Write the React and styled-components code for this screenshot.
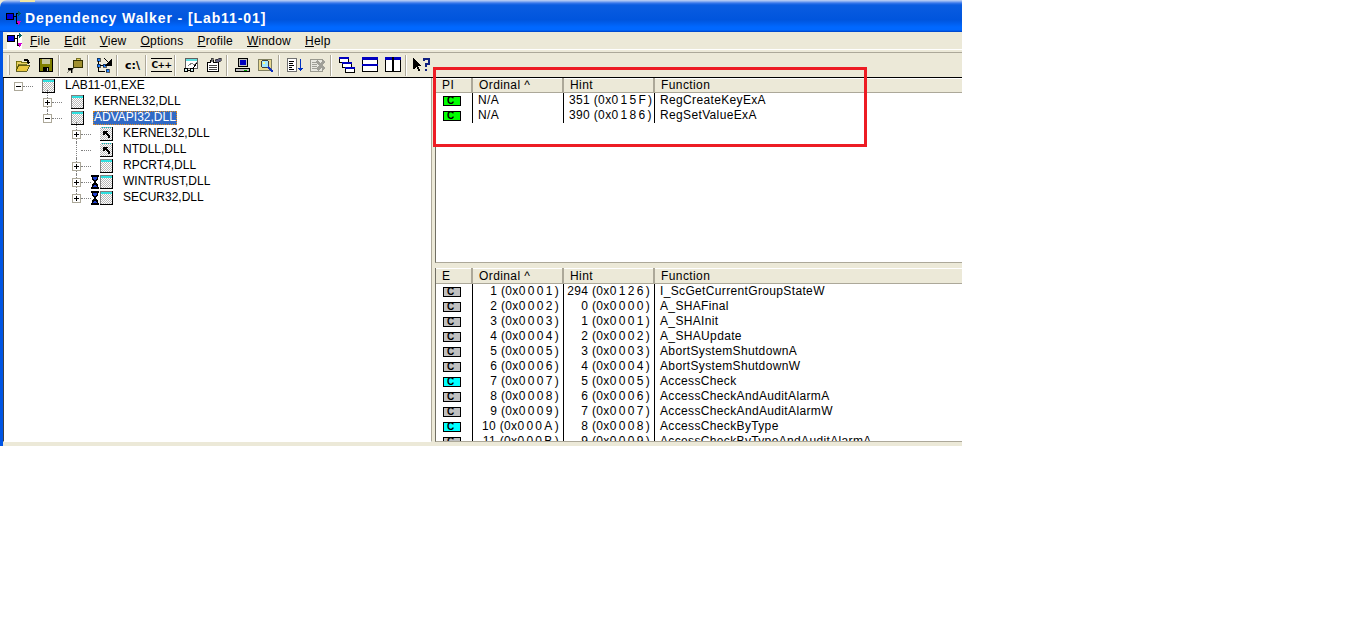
import React from 'react';
import styled, { createGlobalStyle } from 'styled-components';

const GlobalStyle = createGlobalStyle`
  html, body {
    margin: 0;
    background: #fff;
  }
  * { box-sizing: border-box; }
`;

const UI_FONT = `"Liberation Sans", Arial, sans-serif`;

const Window = styled.div`
  position: relative;
  width: 962px;
  height: 446px;
  background: #ece9d8;
  font-family: ${UI_FONT};
  font-size: 12px;
  color: #000;
  overflow: hidden;
`;

const TitleBar = styled.div`
  height: 32px;
  padding: 4px 0 0 6px;
  display: flex;
  align-items: center;
  gap: 4px;
  border-top-left-radius: 7px;
  background:
    linear-gradient(#f2e6a0, #f2e6a0) no-repeat 20px 0 / 15px 2px,
    linear-gradient(#c4d4f4 0, #6f9cf0 2px, #3a78ea 3px, #0a5ce0 5px, #0055dd 20px, #0068ff 27px, #0068ff 30px, #0040c0 32px);
`;

const TitleText = styled.span`
  color: #fff;
  font-weight: bold;
  font-size: 14px;
  letter-spacing: 0.9px;
`;

const Body = styled.div`
  border-left: 3px solid #0055e5;
  height: 414px;
  display: flex;
  flex-direction: column;
`;

const MenuBar = styled.div`
  height: 20px;
  display: flex;
  align-items: center;
  padding-left: 4px;
  border-bottom: 2px solid transparent;
  box-shadow: 0 1px 0 #aca899, inset 0 -1px 0 #fff;
`;

const MenuIcon = styled.div`
  width: 15px;
  height: 16px;
  margin-right: 8px;
  background: #fff;
  display: flex;
`;

const MenuItem = styled.span`
  margin-right: 14px;
  letter-spacing: 0.22px;
  u { text-decoration: underline; text-underline-offset: 1px; }
`;

const Toolbar = styled.div`
  height: 24px;
  margin-top: 1px;
  display: flex;
  align-items: center;
  padding-left: 4px;
`;

const Gripper = styled.div`
  width: 3px;
  height: 20px;
  margin-right: 1px;
  background: #f6f5ef;
  border-right: 1px solid #aca899;
`;

const ToolButton = styled.div`
  width: 23px;
  height: 22px;
  display: flex;
  align-items: center;
  justify-content: center;
  font-family: "DejaVu Sans", sans-serif;
  font-weight: bold;
`;

const CommandText = styled.span`
  font-size: 11px;
  letter-spacing: ${p => p.$tight ? '-0.5px' : '0'};
  ${p => p.$lined && 'border-top: 1px solid #000; border-bottom: 1px solid #000; padding: 1px 0; font-size: 9px; line-height: 10px;'}
`;

const ToolSep = styled.div`
  width: 5px;
  height: 21px;
  margin-left: 1px;
  background: linear-gradient(90deg, #aca899 0 1px, #fff 1px 2px, transparent 2px);
`;

const Panes = styled.div`
  flex: 1;
  display: flex;
  min-height: 0;
  box-shadow: inset 0 1px 0 #000;
  padding-top: 1px;
`;

const TreePane = styled.div`
  width: 429px;
  height: 364px;
  background: #fff;
  border-left: 1px solid #404040;
  border-right: 1px solid #aca899;
  border-bottom: 1px solid #fff;
`;

const TreeRow = styled.div`
  position: relative;
  height: 16px;
  display: flex;
  align-items: center;
  padding-left: ${p => 10 + p.$depth * 29}px;
  ${p => p.$stem && `
    &::before {
      content: '';
      position: absolute;
      left: ${10 + p.$depth * 29 + 4}px;
      top: ${p.$stemTop ?? 0}px;
      bottom: ${p.$stemBottom ?? 0}px;
      border-left: 1px dotted #808080;
    }
  `}
`;

const Expander = styled.div`
  position: relative;
  z-index: 1;
  width: 9px;
  height: 9px;
  flex: none;
  border: 1px solid #aca899;
  background: #fff;
  visibility: ${p => p.$empty ? 'hidden' : 'visible'};
  &::before {
    content: '';
    position: absolute;
    left: 1px;
    top: 3px;
    width: 5px;
    height: 1px;
    background: #000;
  }
  ${p => p.$plus && `
    &::after {
      content: '';
      position: absolute;
      left: 3px;
      top: 1px;
      width: 1px;
      height: 5px;
      background: #000;
    }
  `}
`;

const Connector = styled.div`
  width: 10px;
  flex: none;
  border-top: 1px dotted #808080;
`;

const NodeIcons = styled.div`
  width: 32px;
  height: 16px;
  flex: none;
  display: flex;
  align-items: center;
`;

const WaitSlot = styled.div`
  width: 9px;
  flex: none;
  display: flex;
`;

const NodeLabel = styled.span`
  margin-left: ${p => p.$selected ? '-1px' : '0'};
  height: 14px;
  line-height: 13px;
  padding: 0 ${p => p.$selected ? '1px' : '0'};
  white-space: nowrap;
  ${p => p.$selected && `
    background: #316ac5;
    color: #fff;
    outline: 1px dotted #e08a1e;
    outline-offset: -1px;
  `}
`;

const RightSide = styled.div`
  flex: 1;
  min-width: 0;
  margin-left: 3px;
  display: flex;
  flex-direction: column;
  height: 364px;
`;

const ListPane = styled.div`
  height: ${p => p.$height}px;
  background: #fff;
  border-left: 1px solid #716f64;
  border-bottom: 1px solid #aca899;
  overflow: hidden;
`;

const Splitter = styled.div`
  height: ${p => p.$height}px;
  background: #ece9d8;
  flex: none;
`;

const Columns = styled.div`
  display: grid;
  grid-template-columns: 37px 91px 91px 1fr;
`;

const HeaderRow = styled(Columns)`
  height: ${p => p.$height}px;
  background: #ece9d8;
  border-bottom: 1px solid #aca899;
  letter-spacing: 0.4px;
`;

const HeaderCell = styled.div`
  padding-left: 6px;
  line-height: ${p => p.$lineHeight}px;
  border-right: 2px solid #aca899;
  box-shadow: inset 0 1px 0 #fff;
  &:last-child { border-right: 0; }
`;

const ListRow = styled(Columns)`
  height: 15px;
  line-height: 14px;
`;

const IconCell = styled.div`
  border-right: 1px solid #000;
  padding: 3px 0 0 7px;
`;

const Badge = styled.div`
  width: 18px;
  height: 10px;
  display: flex;
  align-items: center;
  padding-left: 3px;
  background: ${p => p.$color};
  border: 1px solid #000;
  font-family: ${UI_FONT};
  font-weight: bold;
  font-size: 10px;
  line-height: 8px;
`;

const TextCell = styled.div`
  border-right: 1px solid #000;
  white-space: nowrap;
  letter-spacing: 0.35px;
  text-align: ${p => p.$right ? 'right' : 'left'};
  padding: ${p => p.$right ? '0 4px 0 0' : '0 0 0 5px'};
  &:last-child { border-right: 0; }
`;

const HexDigits = styled.span`
  letter-spacing: 2.3px;
`;

const HighlightBox = styled.div`
  position: absolute;
  left: 433px;
  top: 67px;
  width: 434px;
  height: 80px;
  border: 3px solid #ed1c24;
  pointer-events: none;
`;

const Px = ({ children, w = 16, h = 16 }) => (
  <svg width={w} height={h} viewBox={`0 0 ${w} ${h}`} shapeRendering="crispEdges" style={{ display: 'block' }}>
    {children}
  </svg>
);

const AppIcon = () => (
  <Px w={15} h={15}>
    <rect x="0.5" y="2.5" width="7" height="6" fill="#0000e0" stroke="#000" />
    <path d="M8 5.5h3M10.5 2v11M10 2.5h2M10 12.5h2" stroke="#000" fill="none" />
    <path d="M12 0h1v1h1v1h1v1h-1v1h-1v1h-1z" fill="#006060" />
    <path d="M11 10h4v1h-1v2h-1v1h-1v-2h-1z" fill="#d000d0" />
  </Px>
);

const DitherDefs = ({ id }) => (
  <defs>
    <pattern id={id} width="2" height="2" patternUnits="userSpaceOnUse">
      <rect width="2" height="2" fill="#b8b8b8" />
      <rect width="1" height="1" fill="#fff" />
      <rect x="1" y="1" width="1" height="1" fill="#fff" />
    </pattern>
  </defs>
);

const ModuleIcon = ({ forwarded, id }) => (
  <Px w={13} h={14}>
    <DitherDefs id={id} />
    <rect x="0" y="0" width="12" height="13" fill={`url(#${id})`} />
    {!forwarded && <path d="M0 0.5h12M0.5 0v13" stroke="#808080" fill="none" />}
    {forwarded
      ? <path d="M2 0.5h1M4 0.5h1M6 0.5h1M8 0.5h1M10 0.5h1" stroke="#00c0c0" />
      : <rect x="1" y="1" width="11" height="2" fill="#30e0e0" />}
    <path d="M12.5 0v14M0 13.5h13" stroke="#000" fill="none" />
    {forwarded && <path d="M3 4h5v1h-1v1h1v1h1v1h1v3h-2v-2h-1v-1h-1v-1h-1v1h-2z" fill="#000" />}
  </Px>
);

const Hourglass = () => (
  <Px w={9} h={14}>
    <path d="M0 0h8v2h-1v3h-1v1h-1v2h1v1h1v3h1v2h-8v-2h1v-3h1v-1h1v-2h-1v-1h-1v-3h-1z" fill="#000" />
    <path d="M2 2h4v2h-1v1h-2v-1h-1z" fill="#2040d0" />
    <path d="M3 10h2v1h1v1h-4v-1h1z" fill="#2040d0" />
  </Px>
);

// toolbar pictures, drawn on a 16px grid
const FolderOpen = () => (
  <Px>
    <path d="M1 4h5v1h6v2h-8l-3 7z" fill="#e8d060" stroke="#606000" strokeWidth="0.8" />
    <path d="M4 8h11l-3 6h-11z" fill="#e8c840" stroke="#404000" strokeWidth="0.8" />
    <path d="M9 2h4v1h1v2h1l-2 2-2-2h1v-1h-3z" fill="#000" />
  </Px>
);
const Floppy = () => (
  <Px>
    <rect x="1.5" y="1.5" width="13" height="13" fill="#808000" stroke="#000" />
    <rect x="4" y="2" width="8" height="5" fill="#c8c8a0" />
    <rect x="5" y="10" width="6" height="5" fill="#000" />
    <rect x="9" y="11" width="1" height="3" fill="#c0c0c0" />
  </Px>
);
const Connect = () => (
  <Px>
    <rect x="6.5" y="3.5" width="9" height="7" fill="#a09030" stroke="#303000" />
    <rect x="9" y="1" width="4" height="2" fill="#e0d060" stroke="#303000" strokeWidth="0.6" />
    <path d="M0 16l4-4M1 11h5v1h-1v4h-1v-3h-3z" fill="#000" stroke="#000" strokeWidth="0.4" />
  </Px>
);
const TreeArrows = () => (
  <Px>
    <path d="M2.5 3v12M3 8.5h4M3 14.5h6" stroke="#000" fill="none" />
    <rect x="1" y="1" width="3" height="3" fill="#2080ff" stroke="#000" strokeWidth="0.6" />
    <rect x="1" y="7" width="3" height="3" fill="#2080ff" stroke="#000" strokeWidth="0.6" />
    <rect x="7" y="7" width="3" height="3" fill="#2080ff" stroke="#000" strokeWidth="0.6" />
    <rect x="10" y="12" width="3" height="3" fill="#2080ff" stroke="#000" strokeWidth="0.6" />
    <path d="M8 1l5 5M15 3v5h-5z" stroke="#000" fill="#000" />
  </Px>
);
const Glasses = () => (
  <Px>
    <rect x="2.5" y="1.5" width="12" height="10" fill="#fff" stroke="#606060" />
    <rect x="3" y="2" width="11" height="2" fill="#60e0e0" />
    <path d="M5 9l4-3 2 2 3-3" stroke="#808080" fill="none" />
    <circle cx="3" cy="13" r="2" fill="#d0f0f0" stroke="#000" />
    <circle cx="9" cy="13" r="2" fill="#d0f0f0" stroke="#000" />
    <path d="M5 13.5h2M10 11l4-5" stroke="#000" fill="none" />
  </Px>
);
const Properties = () => (
  <Px>
    <path d="M1.5 5.5h3v-2h3v2h5v9h-11z" fill="#fff" stroke="#000" />
    <path d="M3 8.5h8M3 10.5h8M3 12.5h8" stroke="#404040" />
    <rect x="5" y="1" width="2" height="3" fill="#808080" stroke="#000" strokeWidth="0.5" />
    <path d="M9 3l5-2v1l1-1v3l-4 2z" fill="#606080" stroke="#000" strokeWidth="0.5" />
  </Px>
);
const Computer = () => (
  <Px>
    <rect x="3.5" y="1.5" width="9" height="8" fill="#c0c0c0" stroke="#000" />
    <rect x="5" y="3" width="6" height="5" fill="#0000c0" />
    <rect x="0.5" y="11.5" width="14" height="3" fill="#c0c0c0" stroke="#000" />
    <path d="M9 13.5h3" stroke="#00a000" />
  </Px>
);
const FindModule = () => (
  <Px>
    <rect x="0.5" y="2.5" width="13" height="11" fill="#e8d890" stroke="#808060" />
    <circle cx="7" cy="7" r="4" fill="#a0e8ff" stroke="#404040" />
    <path d="M10 10l5 5" stroke="#1030c0" strokeWidth="2" />
    <path d="M5 5h2v2h-2z" fill="#ffff80" />
  </Px>
);
const SortList = () => (
  <Px>
    <rect x="0.5" y="1.5" width="9" height="13" fill="#fff" stroke="#707070" />
    <path d="M2 4.5h5M2 6.5h4M2 8.5h5M2 10.5h3M2 12.5h5" stroke="#000" />
    <path d="M13.5 2v11" stroke="#0030c0" />
    <path d="M11 11h5l-2.5 3z" fill="#0030c0" />
  </Px>
);
const DisabledDoc = () => (
  <Px>
    <rect x="0.5" y="2.5" width="12" height="12" fill="#e8e8e0" stroke="#9a9a90" />
    <path d="M2 5.5h5M2 7.5h5M2 9.5h5M2 11.5h5" stroke="#a0a098" />
    <path d="M7 3l4 3 3-4 1 3-2 3 2 3-2 2-2-2-3 3-2-2 3-4-3-2z" fill="#a0a098" />
  </Px>
);
const Cascade = () => (
  <Px>
    {[[0, 0], [3, 5], [6, 10]].map(([x, y]) => (
      <g key={x}>
        <rect x={x + 0.5} y={y + 0.5} width="9" height="5" fill="#fff" stroke="#000" />
        <rect x={x} y={y} width="10" height="2" fill="#0000c0" />
      </g>
    ))}
  </Px>
);
const SplitHorizontal = () => (
  <Px>
    <rect x="0.5" y="0.5" width="15" height="14" fill="#fff" stroke="#000" />
    <rect x="0" y="0" width="16" height="3" fill="#0000c0" />
    <rect x="0" y="7" width="16" height="2" fill="#0000c0" />
  </Px>
);
const SplitVertical = () => (
  <Px>
    <rect x="0.5" y="0.5" width="15" height="14" fill="#fff" stroke="#000" />
    <rect x="0" y="0" width="16" height="3" fill="#0000c0" />
    <rect x="7" y="0" width="2" height="15" fill="#000" />
  </Px>
);
const HelpPointer = () => (
  <Px w={18} h={16}>
    <path d="M0 1h1v1h1v1h1v1h1v1h1v1h1v1h1v1h1v1h-3v1h1v2h1v2h-2v-2h-1v-2h-1v1h-1v1h-2z" fill="#000" />
    <path d="M11 4v-2h5v5h-3v3" stroke="#102080" strokeWidth="2" fill="none" />
    <rect x="12" y="12" width="2" height="2" fill="#102080" />
  </Px>
);

const menus = [
  ['F', 'ile'], ['E', 'dit'], ['V', 'iew'], ['O', 'ptions'],
  ['P', 'rofile'], ['W', 'indow'], ['H', 'elp'],
];

const tree = [
  { depth: 0, name: 'LAB11-01,EXE', expander: 'minus' },
  { depth: 1, name: 'KERNEL32,DLL', expander: 'plus', stem: true, stemTop: -4 },
  { depth: 1, name: 'ADVAPI32,DLL', expander: 'minus', selected: true, stem: true, stemBottom: 8 },
  { depth: 2, name: 'KERNEL32,DLL', expander: 'plus', forwarded: true, stem: true, stemTop: -4 },
  { depth: 2, name: 'NTDLL,DLL', forwarded: true, stem: true },
  { depth: 2, name: 'RPCRT4,DLL', expander: 'plus', stem: true },
  { depth: 2, name: 'WINTRUST,DLL', expander: 'plus', wait: true, stem: true },
  { depth: 2, name: 'SECUR32,DLL', expander: 'plus', wait: true, stem: true, stemBottom: 8 },
];

const imports = [
  ['N/A', '351 ', '015F', 'RegCreateKeyExA'],
  ['N/A', '390 ', '0186', 'RegSetValueExA'],
];

const exportsList = [
  [1, '294', '0001', '0126', 'I_ScGetCurrentGroupStateW', 'gray'],
  [2, '0', '0002', '0000', 'A_SHAFinal', 'gray'],
  [3, '1', '0003', '0001', 'A_SHAInit', 'gray'],
  [4, '2', '0004', '0002', 'A_SHAUpdate', 'gray'],
  [5, '3', '0005', '0003', 'AbortSystemShutdownA', 'gray'],
  [6, '4', '0006', '0004', 'AbortSystemShutdownW', 'gray'],
  [7, '5', '0007', '0005', 'AccessCheck', 'cyan'],
  [8, '6', '0008', '0006', 'AccessCheckAndAuditAlarmA', 'gray'],
  [9, '7', '0009', '0007', 'AccessCheckAndAuditAlarmW', 'gray'],
  [10, '8', '000A', '0008', 'AccessCheckByType', 'cyan'],
  [11, '9', '000B', '0009', 'AccessCheckByTypeAndAuditAlarmA', 'gray'],
];

const badgeColors = { green: '#00ff00', gray: '#c0c0c0', cyan: '#00ffff' };

const Hex = ({ value }) => <>(0x<HexDigits>{value}</HexDigits>)</>;

const ListHeader = ({ first, height, lineHeight }) => (
  <HeaderRow $height={height}>
    {[first, 'Ordinal ^', 'Hint', 'Function'].map(label => (
      <HeaderCell key={label} $lineHeight={lineHeight}>{label}</HeaderCell>
    ))}
  </HeaderRow>
);

const App = () => (
  <>
    <GlobalStyle />
    <Window>
      <TitleBar>
        <AppIcon />
        <TitleText>Dependency Walker - [Lab11-01]</TitleText>
      </TitleBar>
      <Body>
        <MenuBar>
          <MenuIcon><AppIcon /></MenuIcon>
          {menus.map(([key, rest]) => (
            <MenuItem key={key}><u>{key}</u>{rest}</MenuItem>
          ))}
        </MenuBar>
        <Toolbar>
          <Gripper />
          <ToolButton><FolderOpen /></ToolButton>
          <ToolButton><Floppy /></ToolButton>
          <ToolSep />
          <ToolButton><Connect /></ToolButton>
          <ToolSep />
          <ToolButton><TreeArrows /></ToolButton>
          <ToolSep />
          <ToolButton><CommandText>c:\</CommandText></ToolButton>
          <ToolSep />
          <ToolButton><CommandText $lined $tight>C++</CommandText></ToolButton>
          <ToolSep />
          <ToolButton><Glasses /></ToolButton>
          <ToolButton><Properties /></ToolButton>
          <ToolSep />
          <ToolButton><Computer /></ToolButton>
          <ToolButton><FindModule /></ToolButton>
          <ToolSep />
          <ToolButton><SortList /></ToolButton>
          <ToolButton><DisabledDoc /></ToolButton>
          <ToolSep />
          <ToolButton><Cascade /></ToolButton>
          <ToolButton><SplitHorizontal /></ToolButton>
          <ToolButton><SplitVertical /></ToolButton>
          <ToolSep />
          <ToolButton><HelpPointer /></ToolButton>
        </Toolbar>
        <Panes>
          <TreePane>
            {tree.map((node, i) => (
              <TreeRow key={i} $depth={node.depth} $stem={node.stem} $stemTop={node.stemTop} $stemBottom={node.stemBottom}>
                <Expander $plus={node.expander === 'plus'} $empty={!node.expander} />
                <Connector />
                <NodeIcons>
                  <WaitSlot>{node.wait && <Hourglass />}</WaitSlot>
                  <ModuleIcon forwarded={node.forwarded} id={`dither-${i}`} />
                </NodeIcons>
                <NodeLabel $selected={node.selected}>{node.name}</NodeLabel>
              </TreeRow>
            ))}
          </TreePane>
          <RightSide>
            <ListPane $height={185}>
              <ListHeader first="PI" height={15} lineHeight={14} />
              {imports.map(([ordinal, hint, hex, fn]) => (
                <ListRow key={fn}>
                  <IconCell><Badge $color={badgeColors.green}>C</Badge></IconCell>
                  <TextCell>{ordinal}</TextCell>
                  <TextCell>{hint}<Hex value={hex} /></TextCell>
                  <TextCell>{fn}</TextCell>
                </ListRow>
              ))}
            </ListPane>
            <Splitter $height={5} />
            <ListPane $height={174}>
              <ListHeader first="E" height={16} lineHeight={16} />
              {exportsList.map(([ord, hint, ordHex, hintHex, fn, color]) => (
                <ListRow key={fn}>
                  <IconCell><Badge $color={badgeColors[color]}>C</Badge></IconCell>
                  <TextCell $right>{ord} <Hex value={ordHex} /></TextCell>
                  <TextCell $right>{hint} <Hex value={hintHex} /></TextCell>
                  <TextCell>{fn}</TextCell>
                </ListRow>
              ))}
            </ListPane>
          </RightSide>
        </Panes>
      </Body>
      <HighlightBox />
    </Window>
  </>
);

export default App;
